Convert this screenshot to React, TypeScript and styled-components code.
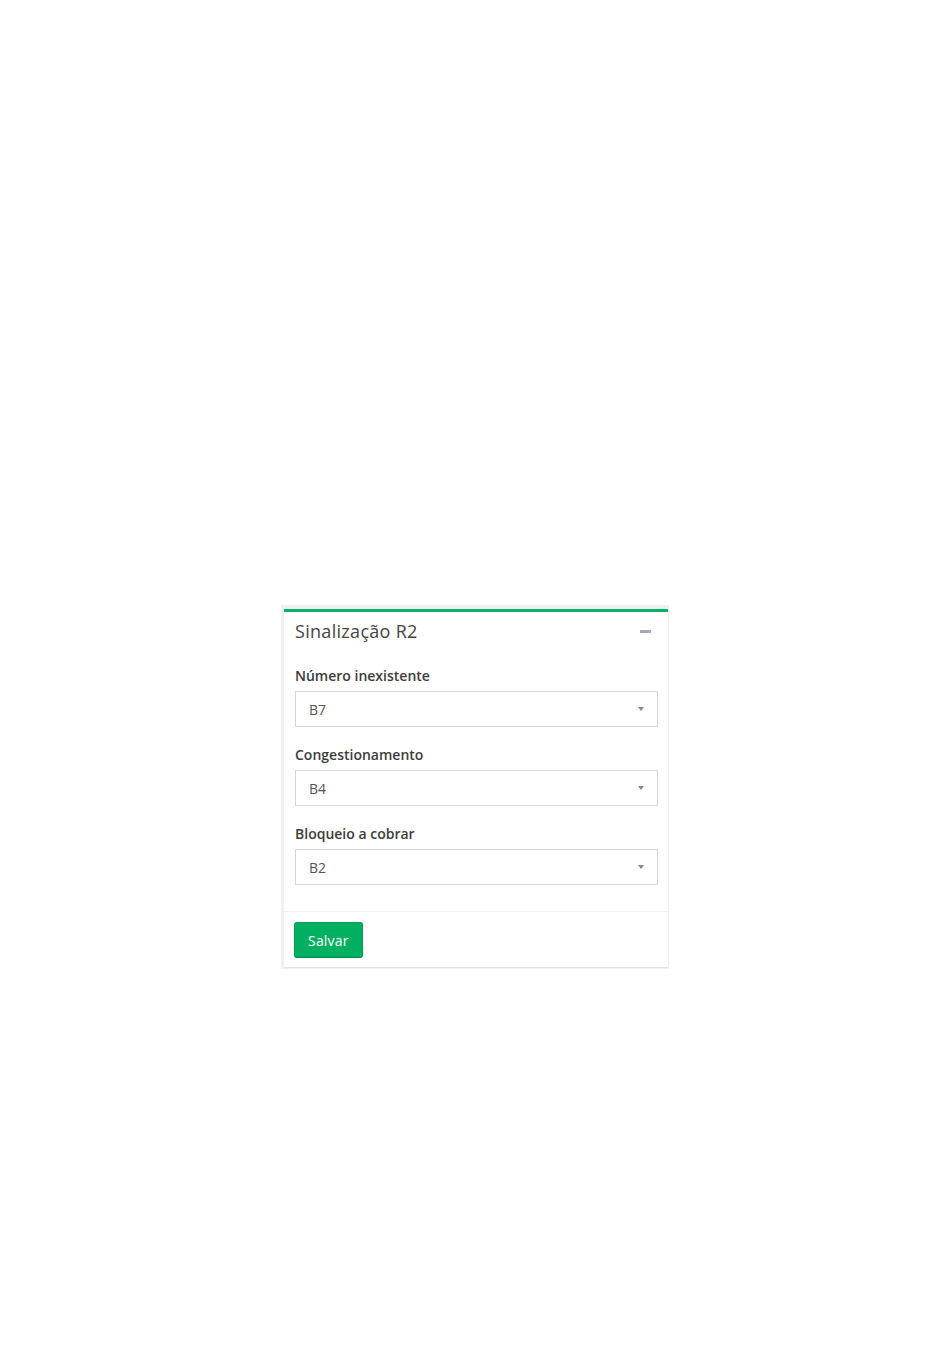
import React from 'react';
import styled, { createGlobalStyle } from 'styled-components';

const GlobalStyle = createGlobalStyle`
  body {
    margin: 0;
    background: #ffffff;
    font-family: 'Open Sans', 'Noto Sans', sans-serif;
    color: #333;
  }
`;

const Page = styled.div`
  display: flex;
  justify-content: center;
  padding-top: 605px;
`;

const Frame = styled.div`
  width: 384px;
  background: #eef0f3;
  padding: 4px 1px 1px 3px;
`;

const Box = styled.section`
  background: #ffffff;
  border-top: 3px solid #00b463;
`;

const BoxHeader = styled.header`
  display: flex;
  justify-content: space-between;
  align-items: center;
  padding: 7px 17px 13px 11px;
  height: 24px;
`;

const BoxTitle = styled.h3`
  margin: 0;
  font-size: 18px;
  font-weight: 400;
  line-height: 24px;
  letter-spacing: 0.3px;
  color: #444;
`;

const CollapseButton = styled.span`
  display: block;
  width: 11px;
  height: 3px;
  background: #a3a9b8;
`;

const BoxBody = styled.div`
  padding: 9px 10px 9px 11px;
`;

const FormGroup = styled.div`
  margin-bottom: 17px;
`;

const Label = styled.label`
  display: block;
  font-size: 14px;
  font-weight: 600;
  line-height: 21px;
  color: #3c3c3c;
  margin-bottom: 5px;
`;

const SelectBox = styled.div`
  display: flex;
  align-items: center;
  justify-content: space-between;
  height: 36px;
  box-sizing: border-box;
  border: 1px solid #d2d6de;
  padding: 0 13px 0 13px;
  font-size: 14px;
  color: #555;
`;

const Caret = styled.span`
  width: 0;
  height: 0;
  border-left: 3px solid transparent;
  border-right: 3px solid transparent;
  border-top: 4px solid #888;
`;

const BoxFooter = styled.footer`
  border-top: 1px solid #f0f1f3;
  padding: 10px 10px 9px;
  border-bottom: 1px solid #dfe2e6;
`;

const Button = styled.button`
  height: 36px;
  padding: 0 13px;
  border: 1px solid #009d55;
  border-bottom-color: #008a4a;
  border-radius: 3px;
  background: #00b060;
  color: #ffffff;
  font-family: 'Open Sans', 'Noto Sans', sans-serif;
  font-size: 14px;
  letter-spacing: 0.2px;
  cursor: pointer;
`;

const fields = [
  { label: 'Número inexistente', value: 'B7' },
  { label: 'Congestionamento', value: 'B4' },
  { label: 'Bloqueio a cobrar', value: 'B2' },
];

export default function App() {
  return (
    <>
      <GlobalStyle />
      <Page>
        <Frame>
          <Box>
            <BoxHeader>
              <BoxTitle>Sinalização R2</BoxTitle>
              <CollapseButton />
            </BoxHeader>
            <BoxBody>
              {fields.map((f) => (
                <FormGroup key={f.label}>
                  <Label>{f.label}</Label>
                  <SelectBox>
                    <span>{f.value}</span>
                    <Caret />
                  </SelectBox>
                </FormGroup>
              ))}
            </BoxBody>
            <BoxFooter>
              <Button>Salvar</Button>
            </BoxFooter>
          </Box>
        </Frame>
      </Page>
    </>
  );
}
